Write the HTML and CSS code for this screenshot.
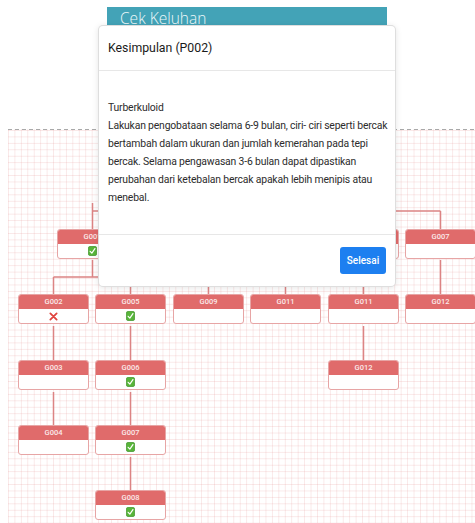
FILE: index.html
```html
<!DOCTYPE html>
<html lang="id">
<head>
<meta charset="utf-8">
<title>Cek Keluhan</title>
<link rel="stylesheet" href="styles.css">
</head>
<body>
<div class="page">
  <header class="titlebar"><h1>Cek Keluhan</h1></header>

  <section class="canvas">
    <svg class="links" width="467" height="394" viewBox="0 0 467 394">
      <g fill="none" stroke="#dc8484" stroke-width="1.5">
        <!-- top bus -->
        <path d="M84.5 74 V100 M84.5 82 H432.5 M200.5 82 V100 M277.5 82 V100 M355.5 82 V100 M432.5 82 V100"/>
        <!-- G001 children -->
        <path d="M84.5 131 V148 M45.5 148 H122.5 M45.5 148 V165 M122.5 148 V165"/>
        <!-- row 1 to row 2 -->
        <path d="M200.5 131 V165 M277.5 131 V165 M355.5 131 V165 M432.5 131 V165"/>
        <!-- columns -->
        <path d="M45.5 197 V231 M45.5 263 V296"/>
        <path d="M122.5 197 V231 M122.5 263 V296 M122.5 328 V361"/>
        <path d="M355.5 197 V231"/>
      </g>
    </svg>

    <!-- row 1 -->
    <div class="node" style="left:49px;top:100px"><div class="node-head">G001</div><div class="node-body"><svg class="ok" viewBox="0 0 10 11"><rect x="0.5" y="0.5" width="9" height="10" rx="1.6"/><path d="M2.4 5.8 L4.3 7.9 L7.7 2.8"/></svg></div></div>
    <div class="node" style="left:165px;top:100px"><div class="node-head">G008</div><div class="node-body"></div></div>
    <div class="node" style="left:242px;top:100px"><div class="node-head">G010</div><div class="node-body"></div></div>
    <div class="node" style="left:320px;top:100px"><div class="node-head">G010</div><div class="node-body"></div></div>
    <div class="node" style="left:397px;top:100px"><div class="node-head">G007</div><div class="node-body"></div></div>

    <!-- row 2 -->
    <div class="node" style="left:10px;top:165px"><div class="node-head">G002</div><div class="node-body"><svg class="no" viewBox="0 0 10 10"><path d="M1.5 1.5 L8.5 8.5 M8.5 1.5 L1.5 8.5"/></svg></div></div>
    <div class="node" style="left:87px;top:165px"><div class="node-head">G005</div><div class="node-body"><svg class="ok" viewBox="0 0 10 11"><rect x="0.5" y="0.5" width="9" height="10" rx="1.6"/><path d="M2.4 5.8 L4.3 7.9 L7.7 2.8"/></svg></div></div>
    <div class="node" style="left:165px;top:165px"><div class="node-head">G009</div><div class="node-body"></div></div>
    <div class="node" style="left:242px;top:165px"><div class="node-head">G011</div><div class="node-body"></div></div>
    <div class="node" style="left:320px;top:165px"><div class="node-head">G011</div><div class="node-body"></div></div>
    <div class="node" style="left:397px;top:165px"><div class="node-head">G012</div><div class="node-body"></div></div>

    <!-- row 3 -->
    <div class="node" style="left:10px;top:231px"><div class="node-head">G003</div><div class="node-body"></div></div>
    <div class="node" style="left:87px;top:231px"><div class="node-head">G006</div><div class="node-body"><svg class="ok" viewBox="0 0 10 11"><rect x="0.5" y="0.5" width="9" height="10" rx="1.6"/><path d="M2.4 5.8 L4.3 7.9 L7.7 2.8"/></svg></div></div>
    <div class="node" style="left:320px;top:231px"><div class="node-head">G012</div><div class="node-body"></div></div>

    <!-- row 4 -->
    <div class="node" style="left:10px;top:296px"><div class="node-head">G004</div><div class="node-body"></div></div>
    <div class="node" style="left:87px;top:296px"><div class="node-head">G007</div><div class="node-body"><svg class="ok" viewBox="0 0 10 11"><rect x="0.5" y="0.5" width="9" height="10" rx="1.6"/><path d="M2.4 5.8 L4.3 7.9 L7.7 2.8"/></svg></div></div>

    <!-- row 5 -->
    <div class="node" style="left:87px;top:361px"><div class="node-head">G008</div><div class="node-body"><svg class="ok" viewBox="0 0 10 11"><rect x="0.5" y="0.5" width="9" height="10" rx="1.6"/><path d="M2.4 5.8 L4.3 7.9 L7.7 2.8"/></svg></div></div>
  </section>
</div>

<div class="modal" role="dialog" aria-labelledby="modal-title">
  <div class="modal-header"><h2 id="modal-title">Kesimpulan (P002)</h2></div>
  <div class="modal-body">
    <p>Turberkuloid<br>Lakukan pengobataan selama 6-9 bulan, ciri- ciri seperti bercak<br>bertambah dalam ukuran dan jumlah kemerahan pada tepi<br>bercak. Selama pengawasan 3-6 bulan dapat dipastikan<br>perubahan dari ketebalan bercak apakah lebih menipis atau<br>menebal.</p>
  </div>
  <div class="modal-footer"><button class="btn-primary" type="button">Selesai</button></div>
</div>
</body>
</html>
```
FILE: styles.css
```css
html, body {
  margin: 0;
  padding: 0;
  background: #fff;
  overflow: hidden;
}

body {
  width: 475px;
  height: 523px;
  font-family: Roboto, "Liberation Sans", sans-serif;
  position: relative;
}

.page {
  padding-top: 7px;
  display: flex;
  flex-direction: column;
}

.titlebar {
  margin-left: 107px;
  width: 280px;
  height: 40px;
  background: #43a3b7;
}

.titlebar h1 {
  margin: 0;
  padding: 1px 0 0 13px;
  font-family: "Open Sans", "Liberation Sans", sans-serif;
  font-weight: 300;
  font-size: 15.5px;
  line-height: 20px;
  color: #eef8fa;
}

/* diagram canvas with a squared paper background */
.canvas {
  position: relative;
  margin-top: 82px;
  margin-left: 8px;
  height: 394px;
  background-color: #fff;
  background-image:
    linear-gradient(to right, rgba(228, 140, 140, 0.2) 1px, transparent 1px),
    linear-gradient(to bottom, rgba(228, 140, 140, 0.2) 1px, transparent 1px);
  background-size: 6.45px 6.45px;
  background-position: 0 1px;
  overflow: hidden;
}

.canvas::before {
  content: "";
  position: absolute;
  left: 0;
  right: 0;
  top: 0;
  height: 1px;
  background: repeating-linear-gradient(to right, #a9a9a9 0 4px, transparent 4px 7px);
}

.links {
  position: absolute;
  left: 0;
  top: 0;
}

.node {
  position: absolute;
  width: 71px;
  box-sizing: border-box;
  border: 1px solid #e7a5a5;
  border-radius: 3px;
  background: #fff;
  overflow: hidden;
}

.node-head {
  height: 14px;
  background: #e06b6b;
  color: #fbeaea;
  font-size: 7.5px;
  font-weight: 500;
  line-height: 14px;
  text-align: center;
}

.node-body {
  height: 14px;
  display: flex;
  align-items: center;
  justify-content: center;
}

.ok {
  width: 9px;
  height: 10px;
}

.ok rect {
  fill: #58b53a;
  stroke: #3f9228;
  stroke-width: 0.8;
}

.ok path {
  fill: none;
  stroke: #fff;
  stroke-width: 1.3;
  stroke-linecap: round;
  stroke-linejoin: round;
}

.no {
  width: 9px;
  height: 9px;
}

.no path {
  fill: none;
  stroke: #e0453f;
  stroke-width: 2;
  stroke-linecap: round;
}

/* dialog */
.modal {
  position: absolute;
  left: 98px;
  top: 25px;
  width: 298px;
  height: 262px;
  box-sizing: border-box;
  display: flex;
  flex-direction: column;
  background: #fff;
  border: 1px solid rgba(0, 0, 0, 0.13);
  border-radius: 5px;
  box-shadow: 0 1px 6px rgba(0, 0, 0, 0.1);
}

.modal-header {
  height: 45px;
  box-sizing: border-box;
  border-bottom: 1px solid #e7e7e7;
  display: flex;
  align-items: center;
  padding: 0 9px;
}

.modal-header h2 {
  margin: 0;
  font-size: 12.3px;
  font-weight: 400;
  color: #1a1a1a;
}

.modal-body {
  flex: 1;
  padding: 28px 9px 0;
}

.modal-body p {
  margin: 0;
  font-size: 10.4px;
  line-height: 18px;
  letter-spacing: -0.17px;
  white-space: nowrap;
  color: #2c2c2c;
}

.modal-footer {
  height: 52px;
  box-sizing: border-box;
  border-top: 1px solid #e7e7e7;
  display: flex;
  align-items: center;
  justify-content: flex-end;
  padding: 0 9px;
}

.btn-primary {
  width: 46px;
  height: 27px;
  border: 0;
  border-radius: 3px;
  background: #1d7ff0;
  color: #fff;
  font-family: Roboto, "Liberation Sans", sans-serif;
  font-size: 10px;
  font-weight: 500;
  padding: 0;
}
```
